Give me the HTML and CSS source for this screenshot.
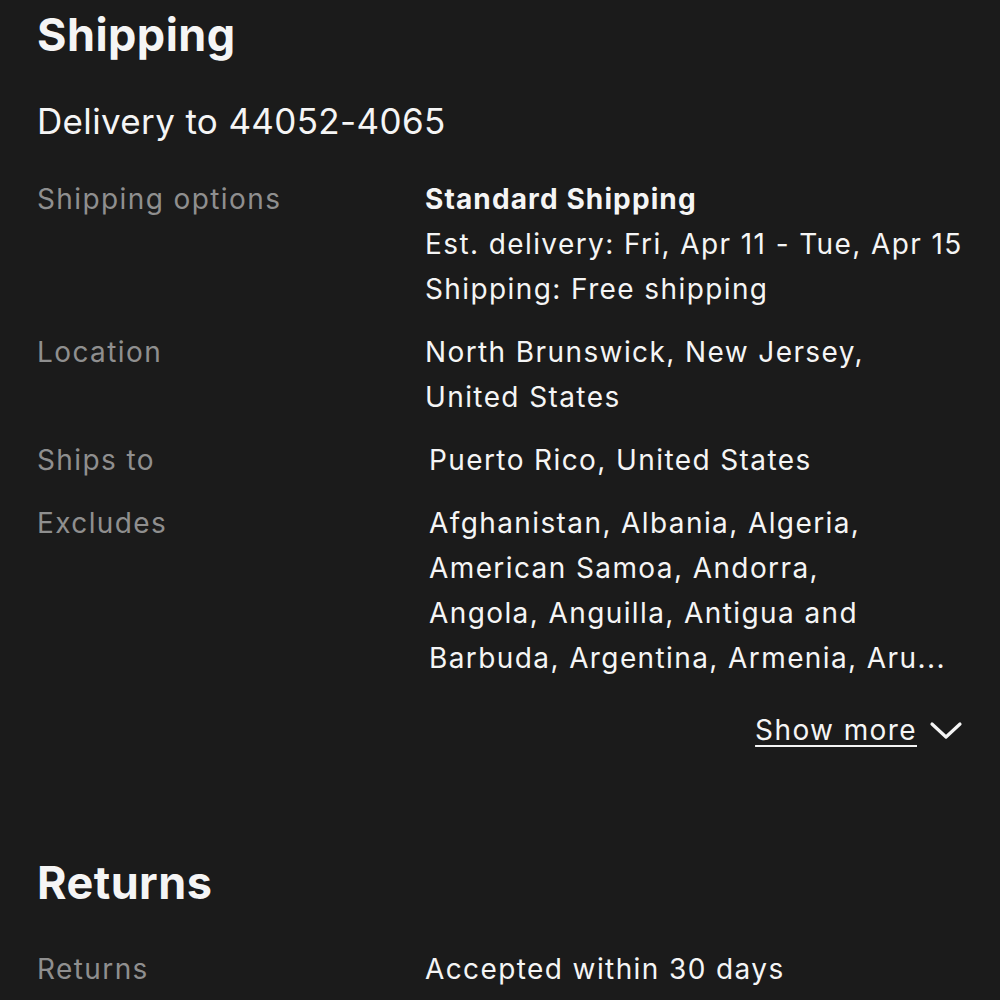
FILE: index.html
```html
<!DOCTYPE html>
<html lang="en">
<head>
  <meta charset="UTF-8" />
  <meta name="viewport" content="width=device-width, initial-scale=1.0"/>
  <title>Shipping and returns</title>
  <link rel="stylesheet" href="styles.css">
</head>
<body>
  <section class="section">
    <h2 class="section-title">Shipping</h2>
    <p class="delivery">Delivery to 44052-4065</p>
    <div class="details">
      <div class="label">Shipping options</div>
      <div class="value">
        <strong>Standard Shipping</strong><br>
        Est. delivery: Fri, Apr 11 - Tue, Apr 15<br>
        Shipping: Free shipping
      </div>

      <div class="label">Location</div>
      <div class="value">North Brunswick, New Jersey,<br>United States</div>

      <div class="label">Ships to</div>
      <div class="value shifted">Puerto Rico, United States</div>

      <div class="label">Excludes</div>
      <div class="value shifted">
        Afghanistan, Albania, Algeria,<br>
        American Samoa, Andorra,<br>
        Angola, Anguilla, Antigua and<br>
        Barbuda, Argentina, Armenia, Aru...
      </div>
    </div>
    <div class="more">
      <a href="#" class="more-link">Show more</a>
      <svg class="chevron" width="34" height="20" viewBox="0 0 34 20">
        <path d="M3 3 L17 16 L31 3" fill="none" stroke="#f5f5f5" stroke-width="3.2" stroke-linecap="round" stroke-linejoin="round"/>
      </svg>
    </div>
  </section>

  <section class="section returns">
    <h2 class="section-title">Returns</h2>
    <div class="details">
      <div class="label">Returns</div>
      <div class="value">Accepted within 30 days</div>
    </div>
  </section>
</body>
</html>
```

FILE: styles.css
```css
body {
  margin: 0;
  background: #1b1b1b;
  color: #f5f5f5;
  font-family: Inter, "Noto Sans", Arial, sans-serif;
  overflow: hidden;
}

.section {
  padding: 0 37px 0 37px;
}

.section-title {
  margin: 0;
  font-size: 45px;
  font-weight: 700;
  line-height: 70px;
  letter-spacing: 0.01em;
}

.delivery {
  margin: 26px 0 31px;
  font-size: 35px;
  line-height: 50px;
  letter-spacing: 0.01em;
}

.details,
.more {
  font-size: 28px;
  line-height: 45px;
  letter-spacing: 0.05em;
}

.details {
  display: grid;
  grid-template-columns: 388px 1fr;
  row-gap: 18px;
}

.label {
  color: #8f8f8f;
}

.value strong {
  font-weight: 700;
  letter-spacing: 0.04em;
}

.value.shifted {
  padding-left: 4px;
}

.more {
  display: flex;
  justify-content: flex-end;
  align-items: center;
  gap: 12px;
  margin-top: 27px;
}

.more-link {
  color: #f5f5f5;
  text-decoration: underline;
  text-underline-offset: 5px;
  text-decoration-thickness: 2px;
}

.returns {
  margin-top: 95px;
}

.returns .details {
  margin-top: 29px;
}
```
